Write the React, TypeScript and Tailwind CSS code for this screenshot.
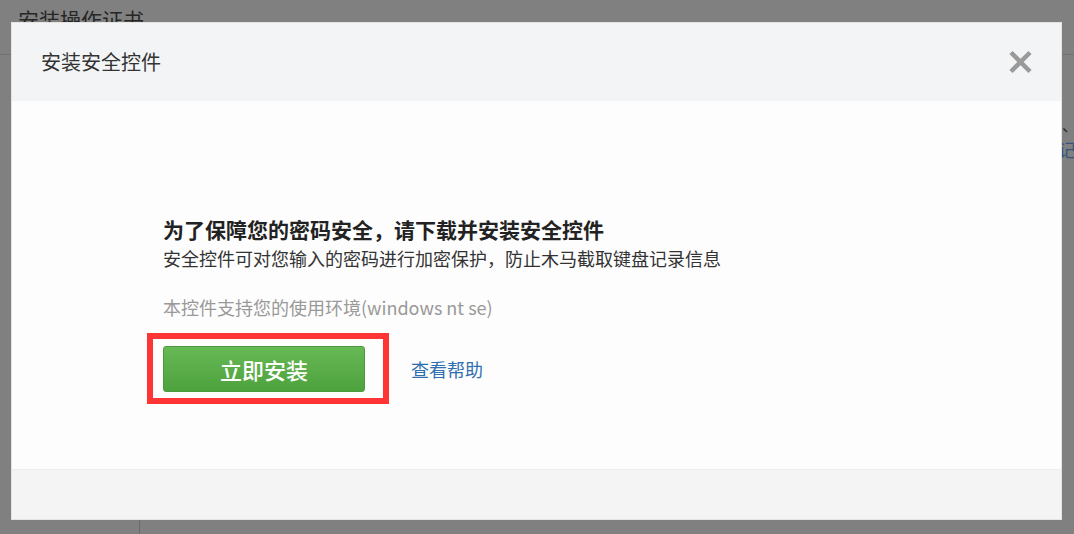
const font = { fontFamily: '"Noto Sans CJK SC", "Noto Sans", sans-serif' };

const CloseIcon = () => (
  <svg width="25" height="24" viewBox="0 0 25 24" fill="none">
    <path d="M3 2.5 L22 21.5 M22 2.5 L3 21.5" stroke="#9a9a9a" strokeWidth="4.5" strokeLinecap="butt" />
  </svg>
);

export default function App() {
  return (
    <div
      className="relative w-[1074px] h-[534px] overflow-hidden bg-[#808080]"
      style={font}
    >
      {/* page underneath the overlay */}
      <div className="absolute left-[18px] top-[9px] text-[21px] leading-none text-[#262626]">
        安装操作证书
      </div>
      <div className="absolute left-0 top-[54px] w-full h-px bg-[#737373]" />
      <div className="absolute left-[1062px] top-[112px] text-[16px] text-[#2b2b2b]">、</div>
      <div className="absolute left-[1058px] top-[136px] text-[18px] text-[#35557c]">记</div>
      <div className="absolute left-[139px] top-[519px] w-px h-[15px] bg-[#6a6a6a]" />

      {/* dialog */}
      <div className="absolute left-[11px] top-[22px] w-[1051px] h-[498px] flex flex-col border border-[#e4e4e4] bg-[#fdfdfd]">
        <div className="h-[78px] shrink-0 flex items-center justify-between pl-[29px] pr-[28px] bg-[#f3f4f5]">
          <span className="text-[20px] text-[#333333]">安装安全控件</span>
          <button className="flex items-center justify-center">
            <CloseIcon />
          </button>
        </div>

        <div className="flex-1 pl-[151px] pt-[114px]">
          <div className="text-[21px] leading-[29px] font-bold text-[#222222]">
            为了保障您的密码安全，请下载并安装安全控件
          </div>
          <div className="text-[18px] leading-[28px] text-[#333333]">
            安全控件可对您输入的密码进行加密保护，防止木马截取键盘记录信息
          </div>
          <div className="mt-[21px] text-[18px] leading-[28px] text-[#999999]">
            本控件支持您的使用环境(windows nt se)
          </div>

          <div className="mt-[25px] flex items-center gap-[46px]">
            <div className="relative">
              <button className="w-[202px] h-[46px] rounded-[3px] border border-[#4a9a3a] bg-gradient-to-b from-[#66b955] to-[#4ea23e] text-[22px] font-medium text-white">
                立即安装
              </button>
              <div className="absolute -left-[16px] -top-[13px] w-[242px] h-[71px] border-[6px] border-[#ff3434] pointer-events-none" />
            </div>
            <a className="text-[18px] text-[#2f6fb0]">查看帮助</a>
          </div>
        </div>

        <div className="h-[50px] shrink-0 bg-[#f4f4f4] border-t border-[#eeeeee]" />
      </div>
    </div>
  );
}
